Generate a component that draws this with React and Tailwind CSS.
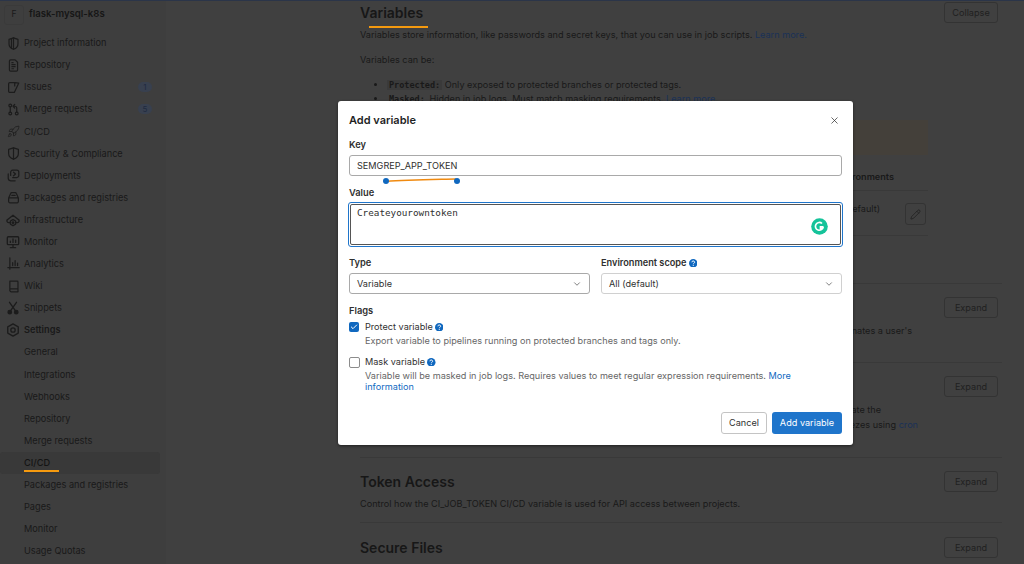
import React from "react";
import { Rocket, X, Pencil, ChevronDown, Check } from "lucide-react";

const S = ({ children, size = 13 }) => (
  <svg width={size} height={size} viewBox="0 0 16 16" fill="none" stroke="#1c1c1c" strokeWidth="1.500" strokeLinecap="round" strokeLinejoin="round">{children}</svg>
);
const Hexa = () => (<S><path d="M8 1 13.500 3v5.500c0 3-2.500 5.500-5.500 6.500-3-1-5.500-3.500-5.500-6.500V3z" /><path d="M8 1v14M5.500 2.500v10.500" /></S>);
const Repo = () => (<S><path d="M3 2.500A1.500 1.500 0 0 1 4.500 1H10l3 3v9.500a1.500 1.500 0 0 1-1.500 1.500h-7A1.500 1.500 0 0 1 3 13.500z" /><path d="M6 7h4M6 9.500h4M6 12h2M6 4.500h1.500" /></S>);
const Issue = () => (<S><path d="M9.500 2H3.500A1.500 1.500 0 0 0 2 3.500v9A1.500 1.500 0 0 0 3.500 14h5.500l1-2 4.500-9.500L10 2M9.500 2v4" /></S>);
const MR = () => (<S><circle cx="4" cy="3" r="1.700" /><circle cx="4" cy="13" r="1.700" /><circle cx="12" cy="13" r="1.700" /><path d="M4 5v6M12 11V6.500A2.500 2.500 0 0 0 9.500 4H8M9.500 1.800 7.500 4l2 2.200" /></S>);
const Sec = () => (<S><path d="M8 1 14 3v5c0 3.200-2.700 5.800-6 7-3.300-1.200-6-3.800-6-7V3z" /><path d="M8 1v14" /></S>);
const Deploy = () => (<S><path d="M4.500 8V4A2.500 2.500 0 0 1 7 1.500h5A2.500 2.500 0 0 1 14.500 4v4a2.500 2.500 0 0 1-2.500 2.500H7" /><path d="M1.500 6v5.500a3 3 0 0 0 3 3H10" /><path d="m8 4 2.500 2.200L8 8.400" /></S>);
const Pkg = () => (<S><path d="M2 8.500V13a1.500 1.500 0 0 0 1.500 1.500h9A1.500 1.500 0 0 0 14 13V8.500zM2 8.500 4.500 3A1.500 1.500 0 0 1 6 2h4a1.500 1.500 0 0 1 1.500 1L14 8.500M6 5.500h4" /></S>);
const Infra = () => (<S size={14}><path d="M4 11H3A2 2 0 0 1 2 7.300L8 2.500l6 4.800a2 2 0 0 1-1 3.700h-1" /><path d="m8 7.500 3 1.700v3.600L8 14.500l-3-1.700V9.200z" /><circle cx="8" cy="11" r=".900" /></S>);
const Mon = () => (<S size={14}><rect x="1.500" y="2" width="13" height="9" rx="1" /><path d="M8 11v3M5 14.500h6M5 8.500V7M8 8.500V4.500M11 8.500V6" /></S>);
const Ana = () => (<S><path d="M1 13h14M3.500 15V1M7 10.500V7M10 10.500V4.500M13 10.500V7.500" /></S>);
const Wiki = () => (<S><path d="M3.500 1.500h9a1 1 0 0 1 1 1V11h-10zM3.500 1.500V13a2 2 0 0 0 1.500 1.500h8.500M13.500 11v3.500" /></S>);
const Snip = () => (<S size={14}><path d="M4 1.500 10.500 10.800M12 1.500 5.500 10.800" /><circle cx="4.300" cy="12.800" r="2" fill="#1c1c1c" /><circle cx="11.700" cy="12.800" r="2" fill="#1c1c1c" /></S>);
const Gear = () => (<S size={14}><path d="M8 1 14 4.500v7L8 15l-6-3.500v-7z" /><circle cx="8" cy="8" r="2.500" /></S>);

const top = [
  ["Project information", <Hexa />],
  ["Repository", <Repo />],
  ["Issues", <Issue />, "1"],
  ["Merge requests", <MR />, "5"],
  ["CI/CD", <Rocket size={13} strokeWidth={1.400} color="#1c1c1c" />],
  ["Security & Compliance", <Sec />],
  ["Deployments", <Deploy />],
  ["Packages and registries", <Pkg />],
  ["Infrastructure", <Infra />],
  ["Monitor", <Mon />],
  ["Analytics", <Ana />],
  ["Wiki", <Wiki />],
  ["Snippets", <Snip />],
];
const sub = ["General", "Integrations", "Webhooks", "Repository", "Merge requests", "CI/CD", "Packages and registries", "Pages", "Monitor", "Usage Quotas"];

function Row({ label, icon, badge, bold }) {
  return (
    <div className="h-[22.100px] flex items-center pl-[6px] pr-[14px]">
      <span className="w-[14px] flex justify-center shrink-0 mr-[4px]">{icon}</span>
      <span className={bold ? "font-semibold" : ""}>{label}</span>
      {badge && <span className="ml-auto h-[10px] min-w-[14px] px-1 rounded-full bg-[#38404f] text-[#1f2a3f] text-[8px] flex items-center justify-center">{badge}</span>}
    </div>
  );
}

const Btn = ({ children }) => (
  <div className="w-[54px] h-[21px] border border-[#333333] rounded-[3px] flex items-center justify-center text-[9.150px] text-[#1f1f1f] shrink-0">{children}</div>
);

const Help = () => (
  <svg width="8.500" height="8.500" viewBox="0 0 16 16" className="inline-block"><circle cx="8" cy="8" r="8" fill="#1068bf" /><path d="M5.500 6.200a2.500 2.500 0 1 1 3.700 2.100c-.8.500-1.200.8-1.200 1.500" fill="none" stroke="#fff" strokeWidth="1.800" /><circle cx="8" cy="12.300" r="1.100" fill="#fff" /></svg>
);

function Section({ h, title, children, last }) {
  return (
    <section className="border-t border-[#393939] relative" style={{ height: h }}>
      <div className={"flex justify-between items-start pr-1 " + (last ? "pt-[14px]" : "pt-[13px]")}>
        <h2 className="text-[14px] leading-[21px] font-semibold text-[#171717]">{title}</h2>
        <Btn>Expand</Btn>
      </div>
      {children}
    </section>
  );
}

const Line = ({ w, children }) => (
  <div className="flex justify-end whitespace-nowrap" style={{ width: w }}>{children}</div>
);

export default function App() {
  return (
    <div className="w-[1024px] h-[564px] overflow-hidden relative bg-[#404040] text-[#191919] text-[9.150px] [font-family:Inter,'Liberation_Sans',sans-serif]">
      <div className="h-px bg-[#2b3549]" />
      <div className="flex h-[563px]">
        <aside className="w-[166px] shrink-0 bg-[#3e3e3e] text-[9.200px] pt-[3px]">
          <div className="flex items-center h-[21px] pl-1">
            <div className="w-[20px] h-[20px] border border-[#3a3a3a] rounded-[3px] flex items-center justify-center text-[8.500px]">F</div>
            <span className="ml-[5px] text-[9.600px] font-semibold text-[#161616]">flask-mysql-k8s</span>
          </div>
          <div className="h-[7px]" />
          {top.map(([l, i, b]) => <Row key={l} label={l} icon={i} badge={b} />)}
          <Row label="Settings" bold icon={<Gear />} />
          {sub.map((l) => (
            <div key={l + "s"} className={"h-[22.100px] mr-[6px] rounded-[3px] flex items-center pl-6 relative " + (l === "CI/CD" ? "bg-[#393939] font-medium text-[#141414]" : "")}>
              {l}
              {l === "CI/CD" && <span className="absolute left-6 bottom-[2px] w-[35px] h-[2px] bg-[#f59a0f]" />}
            </div>
          ))}
        </aside>
        <main className="ml-[194px] w-[642px] shrink-0">
          <section className="h-[282px] relative">
            <div className="flex justify-between items-start pt-[1px] pr-1">
              <h2 className="text-[14px] leading-[21px] font-semibold text-[#171717] relative">Variables
                <span className="absolute left-[9px] top-[24px] w-[59px] h-[2px] bg-[#f59a0f]" />
              </h2>
              <Btn>Collapse</Btn>
            </div>
            <p className="mt-[5px] leading-[14px]">Variables store information, like passwords and secret keys, that you can use in job scripts. <span className="text-[#1a3157]">Learn more.</span></p>
            <p className="mt-[11px] leading-[14px]">Variables can be:</p>
            <ul className="mt-[11px] pl-[27px] leading-[13px] list-disc">
              <li><code className="[font-family:'DejaVu_Sans_Mono',monospace] text-[8.500px] font-semibold bg-[#3a3a3a] px-[2px]">Protected:</code> Only exposed to protected branches or protected tags.</li>
              <li><code className="[font-family:'DejaVu_Sans_Mono',monospace] text-[8.500px] font-semibold px-[2px]">Masked:</code> Hidden in job logs. Must match masking requirements. <span className="text-[#1a3157]">Learn more.</span></li>
            </ul>
            <div className="absolute left-0 top-[119px] w-[568px] h-[35px] bg-[#44403a]" />
            <div className="absolute left-0 top-[163px] w-[568px] h-[27px] border-b border-[#393939] flex items-center justify-end pr-[34px] font-semibold">Environments</div>
            <div className="absolute left-0 top-[190px] w-[568px] h-[45px] border-b border-[#393939] flex items-start">
              <span className="ml-auto mt-[11px] mr-[2px]">All (default)</span>
              <div className="ml-[23px] mt-[12px] mr-[2px] w-[21px] h-[22px] border border-[#333333] rounded-[3px] flex items-center justify-center"><Pencil size={11} strokeWidth={1.500} color="#1c1c1c" /></div>
            </div>
          </section>
          <Section h={79} title="Pipeline triggers">
            <div className="absolute top-[40px] left-0 leading-[14px]">
              <Line w={552}>Trigger a pipeline for a branch or tag by generating a trigger token and using it with an API call. The token impersonates a user's</Line>
            </div>
          </Section>
          <Section h={95} title="Deploy freezes">
            <div className="absolute top-[39px] left-0 leading-[15px]">
              <Line w={521}>Add a freeze period to prevent unintended releases during a period of time for a given environment. You must update the</Line>
              <Line w={558}><span>Specify deploy freezes using <span className="text-[#1a3157]">cron</span></span></Line>
            </div>
          </Section>
          <Section h={65} title="Token Access">
            <p className="absolute top-[39px] left-0 leading-[14px]">Control how the CI_JOB_TOKEN CI/CD variable is used for API access between projects.</p>
          </Section>
          <Section h={60} title="Secure Files" last />
        </main>
      </div>

      <div className="absolute left-[338px] top-[101px] w-[515px] h-[344px] bg-white rounded-[3px] shadow-[0_1px_3px_rgba(0,0,0,0.5)] pl-[11px] pr-[11px] text-[#303030] text-[9.150px]">
        <div className="flex items-center justify-between h-[38px] pr-[2px]">
          <span className="text-[11px] font-semibold text-[#1f1f1f]">Add variable</span>
          <X size={11} strokeWidth={1.600} color="#303030" />
        </div>
        <label className="block font-semibold leading-[12px] text-[9.300px]">Key</label>
        <div className="relative mt-[4px] h-[21px] border border-[#a9a9a9] rounded-[3px] flex items-center px-[7px]">
          SEMGREP_APP_TOKEN
          <svg className="absolute left-[32px] top-[19px]" width="80" height="12" viewBox="0 0 80 12">
            <path d="M4 6.500C25 4.500 50 4.500 74 4" stroke="#f08a10" strokeWidth="1.300" fill="none" />
            <circle cx="4" cy="6" r="3" fill="#1068bf" /><circle cx="75" cy="6" r="3" fill="#1068bf" />
          </svg>
        </div>
        <label className="block font-semibold leading-[12px] mt-[11px] text-[9.300px]">Value</label>
        <div className="mt-[3px] ml-[-1px] mr-[-1px] h-[45px] border-[1.500px] border-[#1f75cb] rounded-[3px] p-px">
          <div className="relative h-full border border-[#555555] rounded-[2px] pl-[6px] pt-[2px] [font-family:'DejaVu_Sans_Mono',monospace] text-[9.300px] leading-[12px]">
            Createyourowntoken
            <svg className="absolute right-[12px] top-[13px]" width="17" height="17" viewBox="0 0 17 17"><circle cx="8.500" cy="8.500" r="8.300" fill="#15c39a" /><path d="M12.500 8.800H9.500v1.800h1.300M12.200 8.800a3.900 3.900 0 1 1-1.200-3.300" fill="none" stroke="#fff" strokeWidth="1.700" /></svg>
          </div>
        </div>
        <div className="grid grid-cols-2 gap-[11px] mt-[10px]">
          <div>
            <div className="font-semibold leading-[12px] text-[9.300px]">Type</div>
            <div className="mt-[4px] h-[21px] border border-[#a9a9a9] rounded-[3px] flex items-center justify-between px-[7px]">Variable<ChevronDown size={10} strokeWidth={1.500} color="#333" /></div>
          </div>
          <div>
            <div className="font-semibold leading-[12px] flex items-center gap-[2px] text-[9.200px]">Environment scope <Help /></div>
            <div className="mt-[4px] h-[21px] border border-[#d0d0d0] rounded-[3px] flex items-center justify-between px-[7px]">All (default)<ChevronDown size={10} strokeWidth={1.500} color="#333" /></div>
          </div>
        </div>
        <div className="font-semibold leading-[12px] mt-[11px] text-[9.300px]">Flags</div>
        <div className="flex items-center h-[12px] mt-[4px] gap-[6px]">
          <span className="w-[10px] h-[10px] rounded-[2px] bg-[#1068bf] flex items-center justify-center"><Check size={8} strokeWidth={3} color="#fff" /></span>
          <span className="flex items-center gap-[2px]">Protect variable <Help /></span>
        </div>
        <p className="ml-[16px] mt-[1px] leading-[13px] text-[#666666]">Export variable to pipelines running on protected branches and tags only.</p>
        <div className="flex items-center h-[12px] mt-[9px] gap-[5px]">
          <span className="w-[11px] h-[11px] rounded-[2px] border border-[#8c8c8c] bg-white" />
          <span className="flex items-center gap-[2px]">Mask variable <Help /></span>
        </div>
        <p className="ml-[16px] mt-[2px] leading-[11px] text-[#666666] w-[440px]">Variable will be masked in job logs. Requires values to meet regular expression requirements. <span className="text-[#1068bf]">More information</span></p>
        <div className="flex justify-end gap-[5px] mt-[20px]">
          <div className="w-[46px] h-[22px] border border-[#c4c4c4] rounded-[3px] flex items-center justify-center">Cancel</div>
          <div className="w-[70px] h-[22px] bg-[#1f75cb] rounded-[3px] flex items-center justify-center text-white">Add variable</div>
        </div>
      </div>
    </div>
  );
}
